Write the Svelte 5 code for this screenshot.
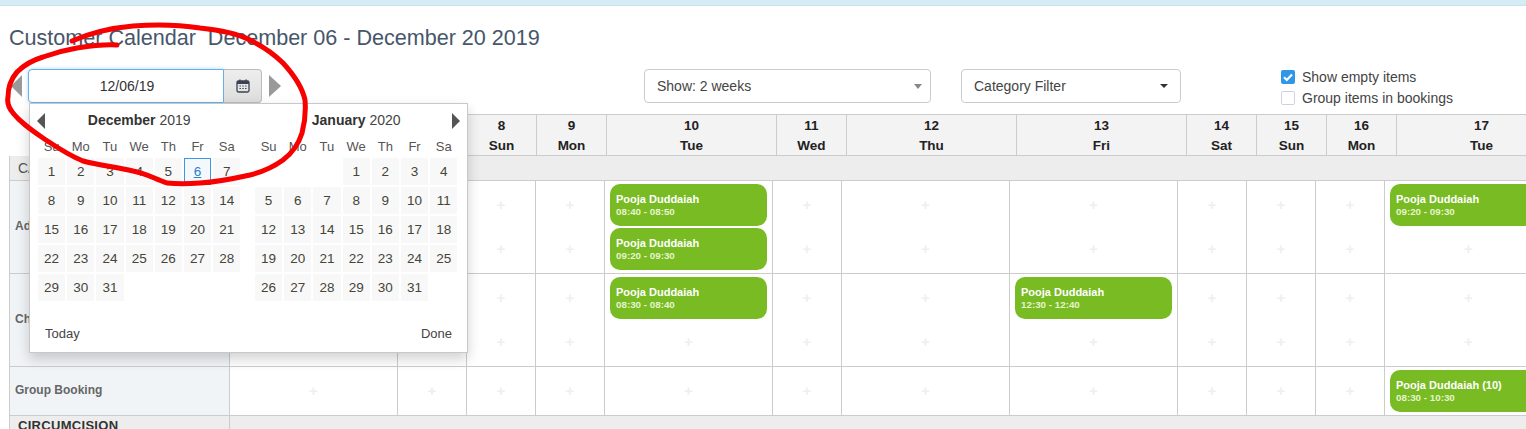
<script>
  const headDays = [
    { n: 6, d: 'Fri', wide: true }, { n: 7, d: 'Sat' }, { n: 8, d: 'Sun' }, { n: 9, d: 'Mon' },
    { n: 10, d: 'Tue', wide: true }, { n: 11, d: 'Wed' }, { n: 12, d: 'Thu', wide: true },
    { n: 13, d: 'Fri', wide: true }, { n: 14, d: 'Sat' }, { n: 15, d: 'Sun' }, { n: 16, d: 'Mon' },
    { n: 17, d: 'Tue', wide: true }
  ];

  const name = 'Pooja Duddaiah';
  // events keyed by column index, slot by slot
  const rows = [
    { label: 'Ad', slots: 2, events: { 4: [[name, '08:40 - 08:50'], [name, '09:20 - 09:30']], 11: [[name, '09:20 - 09:30'], null] } },
    { label: 'Ch', slots: 2, events: { 4: [[name, '08:30 - 08:40'], null], 7: [[name, '12:30 - 12:40'], null] } },
    { label: 'Group Booking', slots: 1, events: { 11: [[name + ' (10)', '08:30 - 10:30']] } }
  ];

  const cols = headDays.map((_, i) => i);

  function slotsFor(row, col) {
    const ev = row.events[col];
    return Array.from({ length: row.slots }, (_, i) => (ev ? ev[i] : null));
  }

  const dow = ['Su', 'Mo', 'Tu', 'We', 'Th', 'Fr', 'Sa'];
  const months = [
    { title: 'December', year: 2019, offset: 0, days: 31 },
    { title: 'January', year: 2020, offset: 3, days: 31 }
  ];

  function cells(m) {
    return [
      ...Array.from({ length: m.offset }, () => null),
      ...Array.from({ length: m.days }, (_, i) => i + 1)
    ];
  }
</script>

<div class="page">
  <div class="topbar"></div>

  <h1>Customer Calendar&nbsp; December 06 - December 20 2019</h1>

  <div class="toolbar">
    <span class="nav prev"></span>
    <div class="datefield">
      <input class="dateinput" value="12/06/19" />
      <button class="calbtn" aria-label="Open calendar">
        <svg width="14" height="14" viewBox="0 0 14 14">
          <rect x="1" y="2" width="12" height="11" rx="1.5" fill="none" stroke="#3b4252" stroke-width="1.3" />
          <rect x="1" y="2" width="12" height="3" fill="#3b4252" />
          <rect x="3.2" y="0.5" width="1.4" height="2.6" fill="#3b4252" />
          <rect x="9.4" y="0.5" width="1.4" height="2.6" fill="#3b4252" />
          <path d="M3.5 7h1.4M6.3 7h1.4M9.1 7h1.4M3.5 9.5h1.4M6.3 9.5h1.4M9.1 9.5h1.4" stroke="#3b4252" stroke-width="1.2" />
        </svg>
      </button>
    </div>
    <span class="nav next"></span>

    <div class="select show">Show: 2 weeks<span class="caret grey"></span></div>
    <div class="select category">Category Filter<span class="caret"></span></div>

    <div class="checks">
      <label class="check">
        <span class="box on">
          <svg width="14" height="14" viewBox="0 0 14 14"><path d="M3 7.2l2.8 2.8L11 4.4" fill="none" stroke="#fff" stroke-width="2.2" /></svg>
        </span>
        Show empty items
      </label>
      <label class="check"><span class="box"></span>Group items in bookings</label>
    </div>
  </div>

  <div class="table">
    <div class="head">
      {#each headDays as h}
        <div class="headcell" class:wide={h.wide}>
          <span>{h.n}</span>
          <span>{h.d}</span>
        </div>
      {/each}
    </div>

    <div class="row cat">
      <div class="catlabel">CA</div>
      <div class="catfill"></div>
    </div>

    {#each rows as row}
      <div class="row">
        <div class="rowlabel">{row.label}</div>
        {#each cols as c}
          <div class="cell">
            {#each slotsFor(row, c) as ev}
              {#if ev}
                <div class="event">
                  <strong>{ev[0]}</strong>
                  <small>{ev[1]}</small>
                </div>
              {:else}
                <div class="plus">+</div>
              {/if}
            {/each}
          </div>
        {/each}
      </div>
    {/each}

    <div class="row cat">
      <div class="catlabel dark">CIRCUMCISION</div>
      <div class="catfill"></div>
    </div>
  </div>

  <!-- datepicker popup -->
  <div class="popup">
    <span class="arrow left"></span>
    <span class="arrow right"></span>
    <div class="months">
      {#each months as m}
        <div class="month">
          <div class="mtitle"><b>{m.title}</b> {m.year}</div>
          <div class="grid dow">
            {#each dow as d}<span>{d}</span>{/each}
          </div>
          <div class="grid">
            {#each cells(m) as day}
              {#if day === null}
                <span></span>
              {:else}
                <span class="day" class:current={m.year === 2019 && day === 6}>{day}</span>
              {/if}
            {/each}
          </div>
        </div>
      {/each}
    </div>
    <div class="popfoot">
      <span>Today</span>
      <span>Done</span>
    </div>
  </div>

  <!-- red hand-drawn annotation -->
  <svg class="scribble" width="330" height="200" viewBox="0 0 330 200">
    <path
      d="M72 41 C88 34 110 28 133 26 C160 24 180 25 200 28 C220 30 238 34 250 40 C262 46 274 54 283 63 C294 75 302 86 305 100 C306 112 305 122 302 133 C298 146 292 153 283 160 C272 168 262 172 250 175 C232 179 218 182 200 183 C188 184 176 184 167 183 C155 179 145 173 133 171 C115 167 98 165 83 161 C68 155 55 146 43 138 C30 129 20 122 13 113 C8 107 7 102 8 97 C8 87 11 79 17 72 C24 65 33 60 43 57 C54 53 65 50 77 48 C90 46 104 44 117 45"
      fill="none"
      stroke="#f60000"
      stroke-width="5"
      stroke-linecap="round"
      stroke-linejoin="round"
    />
  </svg>
</div>

<style>
  :global(body) {
    margin: 0;
    background: #fff;
  }

  .page {
    position: relative;
    width: 1526px;
    height: 429px;
    overflow: hidden;
    font-family: 'Liberation Sans', Arial, sans-serif;
    font-size: 14px;
    color: #333;
  }

  .topbar {
    height: 5px;
    background: #d6ecf5;
    border-bottom: 1px solid #c5e3ef;
  }

  h1 {
    margin: 18px 0 0 9px;
    height: 27px;
    font-size: 21.6px;
    letter-spacing: -0.02px;
    line-height: 27px;
    font-weight: 400;
    color: #47566a;
    white-space: nowrap;
  }

  .toolbar {
    display: flex;
    align-items: flex-start;
    margin-top: 18px;
    height: 45px;
  }

  .nav {
    width: 0;
    height: 0;
    margin-top: 6px;
    border-top: 11px solid transparent;
    border-bottom: 11px solid transparent;
  }

  .nav.prev {
    margin-left: 11px;
    margin-right: 6px;
    border-right: 11px solid #999;
  }

  .nav.next {
    margin-left: 7px;
    border-left: 12px solid #999;
  }

  .datefield {
    display: flex;
    height: 34px;
  }

  .dateinput {
    box-sizing: border-box;
    width: 196px;
    height: 34px;
    padding: 0 0 0 2px;
    border: 1px solid #66afe9;
    border-radius: 4px 0 0 4px;
    box-shadow: 0 0 4px rgba(102, 175, 233, 0.5);
    font: 14px 'Liberation Sans', Arial, sans-serif;
    color: #333;
    text-align: center;
    outline: none;
  }

  .calbtn {
    display: flex;
    align-items: center;
    justify-content: center;
    box-sizing: border-box;
    width: 38px;
    height: 34px;
    padding: 0;
    border: 1px solid #bbb;
    border-left: 0;
    border-radius: 0 4px 4px 0;
    background: linear-gradient(#eeeeee, #dddddd);
  }

  .select {
    position: relative;
    box-sizing: border-box;
    height: 34px;
    padding: 0 12px;
    border: 1px solid #ccc;
    border-radius: 4px;
    line-height: 32px;
    color: #444;
    background: #fff;
  }

  .show {
    width: 287px;
    margin-left: 363px;
  }

  .category {
    width: 220px;
    margin-left: 30px;
  }

  .caret {
    position: absolute;
    right: 12px;
    top: 14px;
    width: 0;
    height: 0;
    border-left: 4px solid transparent;
    border-right: 4px solid transparent;
    border-top: 4px solid #333;
  }

  .show .caret.grey {
    right: 8px;
    border-left-width: 4.5px;
    border-right-width: 4.5px;
    border-top: 5px solid #888;
  }

  .checks {
    display: flex;
    flex-direction: column;
    margin-left: 100px;
  }

  .check {
    display: flex;
    align-items: center;
    height: 21px;
    margin-top: -3px;
    margin-bottom: 3px;
    color: #444;
    white-space: nowrap;
  }

  .box {
    box-sizing: border-box;
    width: 14px;
    height: 14px;
    margin-right: 7px;
    border: 1px solid #cfd0e0;
    border-radius: 2px;
    background: #fff;
  }

  .box.on {
    border: 0;
    background: #2f96e8;
  }

  .box svg {
    display: block;
  }

  .table {
    margin-left: 9px;
    width: 1560px;
  }

  .head {
    display: flex;
    margin-left: 218px;
    height: 40px;
    border-top: 1px solid #ccc;
    border-bottom: 1px solid #ccc;
    background: #f3f3f3;
  }

  .headcell {
    box-sizing: border-box;
    flex: 0 0 70px;
    display: flex;
    flex-direction: column;
    align-items: center;
    justify-content: center;
    gap: 3px;
    border-right: 1px solid #ccc;
    font-size: 13.5px;
    line-height: 17px;
    font-weight: 700;
    color: #222;
  }

  .headcell.wide {
    flex-basis: 170px;
  }

  .row {
    display: grid;
    grid-template-columns: 221px 168px 69px 69px 69px 168px 69px 168px 168px 69px 69px 69px 168px;
    border-bottom: 1px solid #ccc;
  }

  .cat {
    grid-template-columns: 221px 1fr;
    height: 24px;
    background: #ededed;
  }

  .catlabel {
    box-sizing: border-box;
    padding-left: 8px;
    border-left: 1px solid #ccc;
    border-right: 1px solid #ccc;
    font-size: 14px;
    line-height: 25px;
    color: #555;
  }

  .catlabel.dark {
    font-size: 13px;
    font-weight: 700;
    letter-spacing: 0.3px;
    color: #333;
    line-height: 20px;
  }

  .rowlabel {
    box-sizing: border-box;
    display: flex;
    align-items: center;
    padding: 0 0 2px 5px;
    border-left: 1px solid #ccc;
    border-right: 1px solid #ccc;
    background: #f1f4f7;
    font-size: 12px;
    font-weight: 700;
    color: #666;
  }

  .cell {
    box-sizing: border-box;
    display: flex;
    flex-direction: column;
    gap: 2px;
    padding: 3px 5px;
    border-right: 1px solid #ccc;
    min-width: 0;
  }

  .plus {
    height: 42px;
    text-align: center;
    font-size: 15px;
    font-weight: 700;
    line-height: 42px;
    color: #edf0f1;
  }

  .event {
    box-sizing: border-box;
    display: flex;
    flex-direction: column;
    justify-content: center;
    height: 42px;
    padding: 0 6px;
    border-radius: 10px;
    background: #78bb22;
    color: #fff;
    white-space: nowrap;
  }

  .event strong {
    font-size: 11px;
    line-height: 13px;
  }

  .event small {
    font-size: 9.8px;
    font-weight: 700;
    line-height: 11px;
    color: #e6f5cf;
  }

  .popup {
    position: absolute;
    left: 29px;
    top: 103px;
    box-sizing: border-box;
    width: 439px;
    height: 250px;
    padding: 0 8px;
    border: 1px solid #c8c8c8;
    background: #fff;
    box-shadow: 0 6px 12px rgba(0, 0, 0, 0.18);
  }

  .arrow {
    position: absolute;
    top: 9px;
    width: 0;
    height: 0;
    border-top: 8px solid transparent;
    border-bottom: 8px solid transparent;
  }

  .arrow.left {
    left: 7px;
    border-right: 8px solid #555;
  }

  .arrow.right {
    right: 7px;
    border-left: 8px solid #555;
  }

  .months {
    display: flex;
    gap: 14.6px;
  }

  .month {
    width: 202.4px;
  }

  .mtitle {
    height: 34px;
    text-align: center;
    font-size: 14px;
    line-height: 33px;
    color: #444;
  }

  .mtitle b {
    color: #333;
  }

  .grid {
    display: grid;
    grid-template-columns: repeat(7, 27.2px);
    grid-auto-rows: 27px;
    gap: 2px;
  }

  .dow {
    height: 20px;
    grid-auto-rows: 20px;
    font-size: 13px;
    line-height: 18px;
    text-align: center;
    color: #555;
  }

  .day {
    box-sizing: border-box;
    background: #f8f8f8;
    font-size: 13.5px;
    line-height: 27px;
    text-align: center;
    color: #454538;
  }

  .current {
    border: 1px solid #3a97e8;
    background: #f3f8fd;
    line-height: 25px;
    color: #2a7fd0;
    text-decoration: underline;
  }

  .popfoot {
    display: flex;
    justify-content: space-between;
    margin-top: 24px;
    padding: 0 7px;
    font-size: 13px;
    line-height: 18px;
    color: #454545;
  }

  .scribble {
    position: absolute;
    left: 0;
    top: 0;
    pointer-events: none;
  }
</style>
